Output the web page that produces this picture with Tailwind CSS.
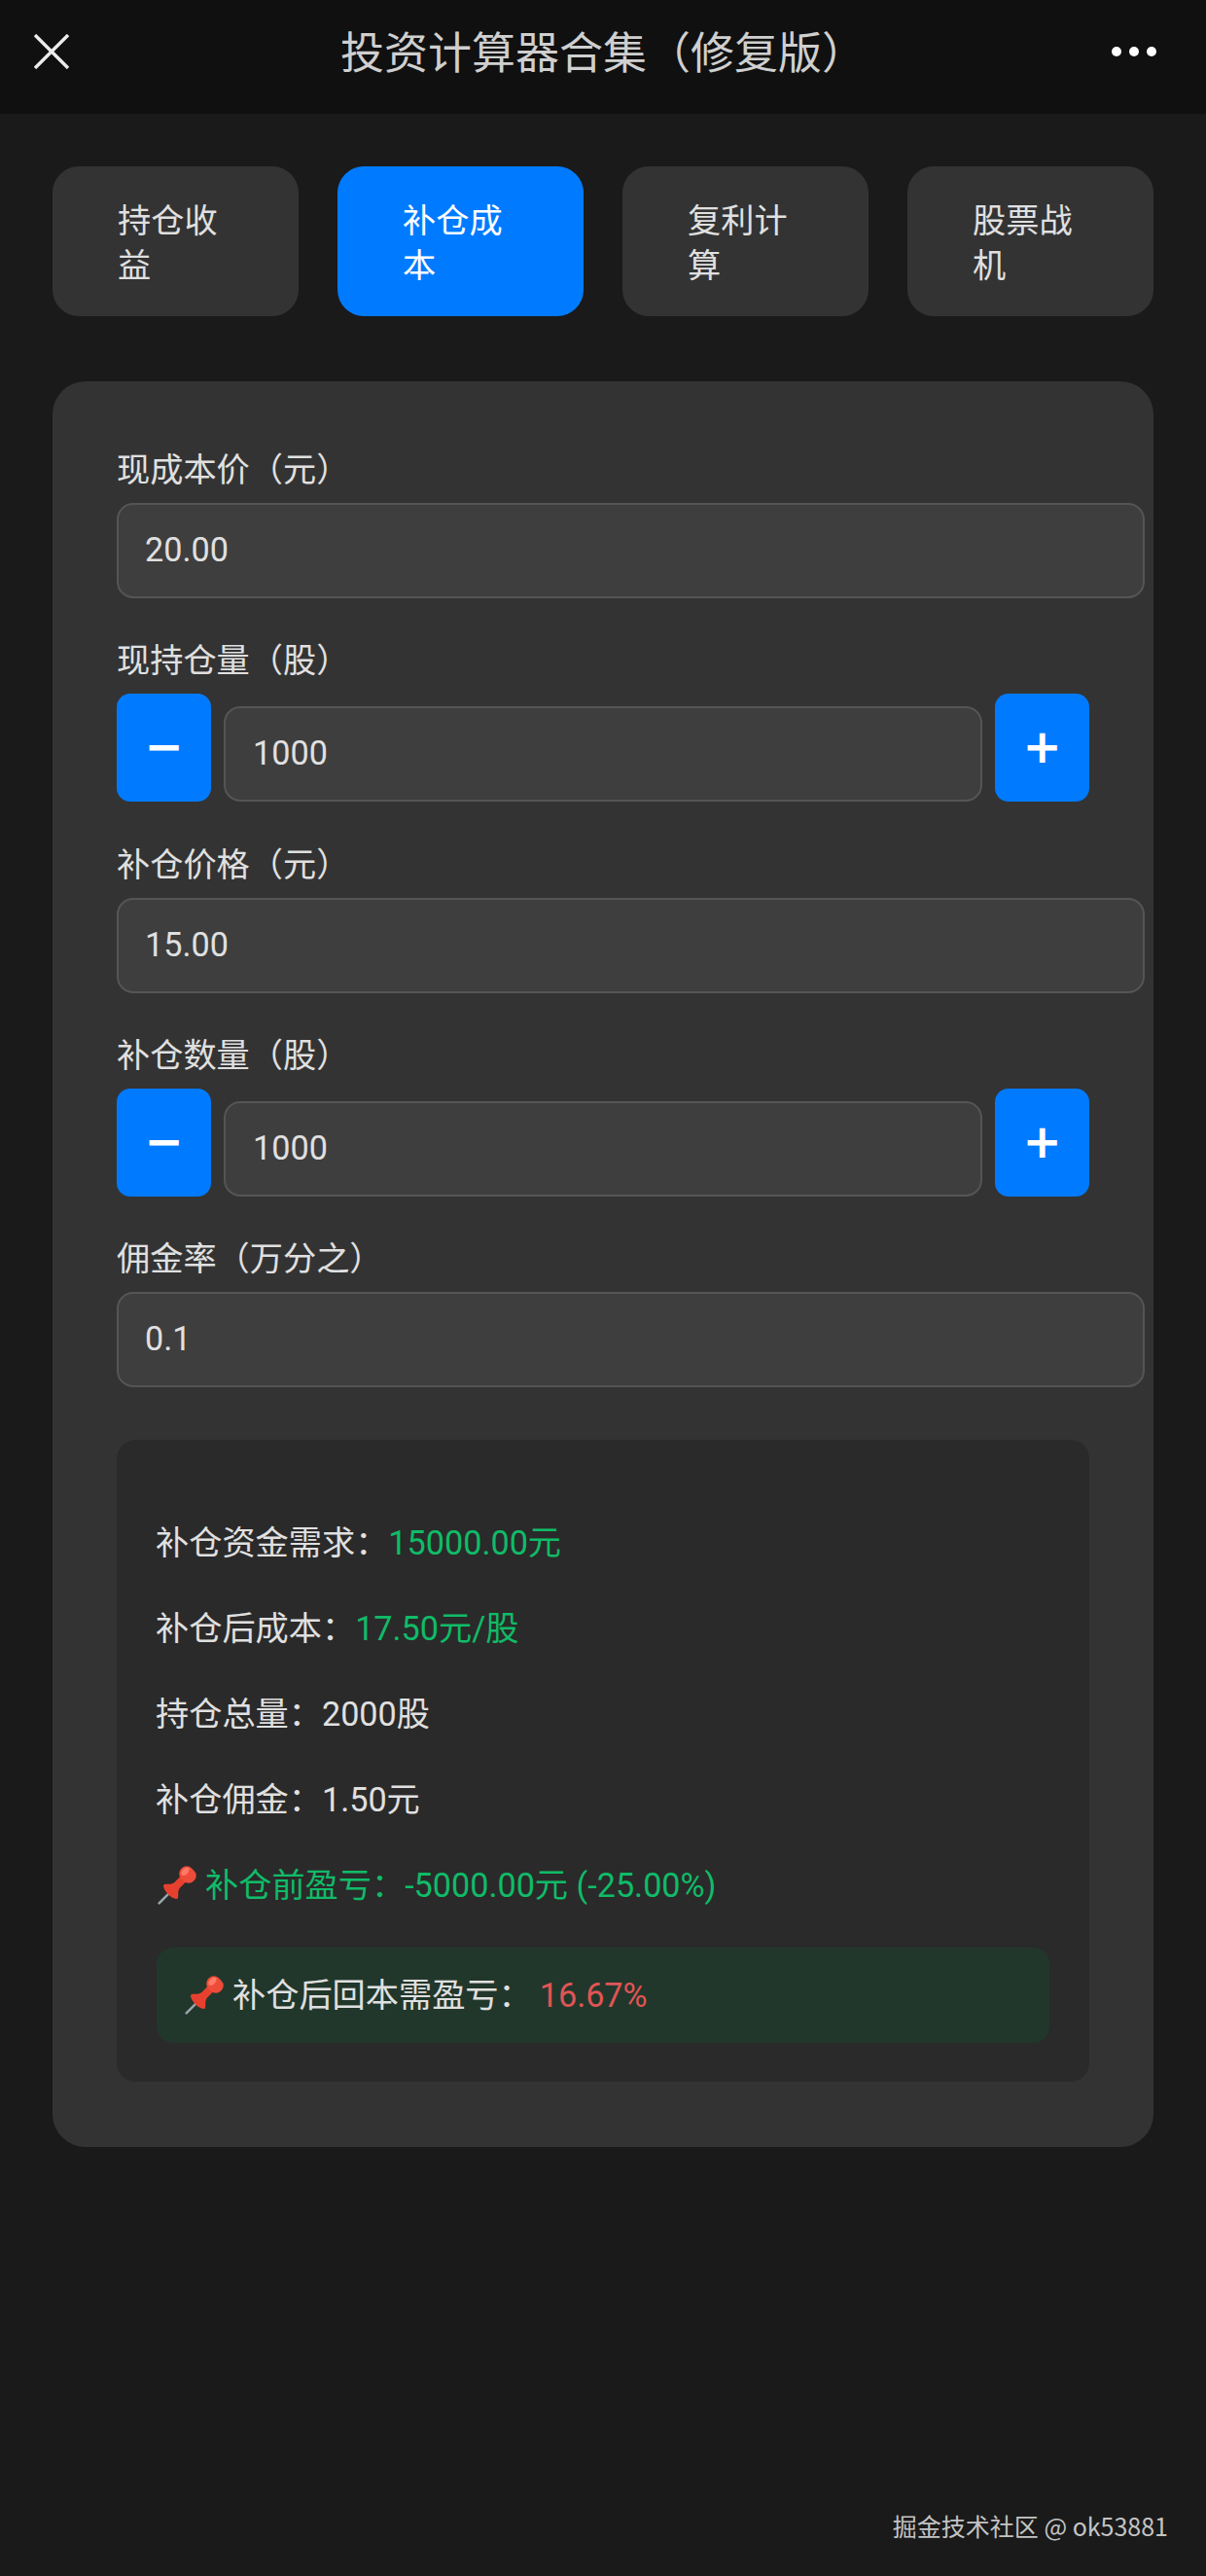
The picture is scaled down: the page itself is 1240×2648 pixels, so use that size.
<!DOCTYPE html>
<html lang="zh-CN">
<head>
  <meta charset="UTF-8" />
  <meta name="viewport" content="width=device-width, initial-scale=1.0" />
  <title>投资计算器合集（修复版）</title>
  <script src="https://cdn.jsdelivr.net/npm/@tailwindcss/browser@4"></script>
</head>
<body class="bg-[#1a1a1a] text-[#e0e0e0] text-[34.2px] leading-[48px] font-[family-name:Roboto,'Noto_Sans_CJK_SC',sans-serif]">
  <div class="relative w-[1240px] h-[2648px] overflow-hidden">
    <!-- top bar -->
    <header class="h-[117px] pb-[11px] pl-[35px] pr-[51px] bg-[#101010] flex items-center justify-between">
      <svg class="w-[36px] h-[36px]" viewBox="0 0 36 36" fill="none" stroke="#ececec" stroke-width="3.4"><path d="M1 1 35 35M35 1 1 35" /></svg>
      <h1 class="text-[45px] leading-[60px] text-[#cfcfcf] ml-[26px] mt-[6px]">投资计算器合集（修复版）</h1>
      <div class="flex gap-[8px]">
        <span class="w-[10px] h-[10px] rounded-full bg-white"></span>
        <span class="w-[10px] h-[10px] rounded-full bg-white"></span>
        <span class="w-[10px] h-[10px] rounded-full bg-white"></span>
      </div>
    </header>

    <main class="px-[54px] pt-[54px]">
      <!-- tabs -->
      <div class="flex gap-[40px] mb-[67px]">
        <button class="w-[253px] h-[154px] pl-[67px] pr-[66px] pt-[3px] rounded-[27px] bg-[#333333] text-left leading-[46px]">持仓收益</button>
        <button class="w-[253px] h-[154px] pl-[67px] pr-[66px] pt-[3px] rounded-[27px] bg-[#007bff] text-left leading-[46px] text-white">补仓成本</button>
        <button class="w-[253px] h-[154px] pl-[67px] pr-[66px] pt-[3px] rounded-[27px] bg-[#333333] text-left leading-[46px]">复利计算</button>
        <button class="w-[253px] h-[154px] pl-[67px] pr-[66px] pt-[3px] rounded-[27px] bg-[#333333] text-left leading-[46px]">股票战机</button>
      </div>

      <section class="h-[1815px] pt-[65px] px-[66px] rounded-[34px] bg-[#333333]">
        <div class="mb-[38px]">
          <label class="block h-[48px] pt-[2px] mb-[12px]">现成本价（元）</label>
          <input value="20.00" class="block w-[1057px] h-[98px] px-[27px] pb-[2px] rounded-[17px] border-2 border-[#555555] bg-[#3e3e3e]" />
        </div>

        <div class="mb-[39px]">
          <label class="block h-[48px] pt-[2px] mb-[12px]">现持仓量（股）</label>
          <div class="flex items-end gap-[13px] w-[1000px]">
            <button class="shrink-0 w-[97px] h-[111px] pb-[3px] rounded-[14px] bg-[#007bff] text-white font-bold text-[48px] font-[family-name:'DejaVu_Sans',sans-serif]">−</button>
            <input value="1000" class="flex-1 min-w-0 h-[98px] px-[28px] pb-[2px] rounded-[17px] border-2 border-[#555555] bg-[#3e3e3e]" />
            <button class="shrink-0 w-[97px] h-[111px] pb-[3px] rounded-[14px] bg-[#007bff] text-white font-bold text-[48px] font-[family-name:'DejaVu_Sans',sans-serif]">+</button>
          </div>
        </div>

        <div class="mb-[38px]">
          <label class="block h-[48px] pt-[2px] mb-[12px]">补仓价格（元）</label>
          <input value="15.00" class="block w-[1057px] h-[98px] px-[27px] pb-[2px] rounded-[17px] border-2 border-[#555555] bg-[#3e3e3e]" />
        </div>

        <div class="mb-[38px]">
          <label class="block h-[48px] pt-[2px] mb-[12px]">补仓数量（股）</label>
          <div class="flex items-end gap-[13px] w-[1000px]">
            <button class="shrink-0 w-[97px] h-[111px] pb-[3px] rounded-[14px] bg-[#007bff] text-white font-bold text-[48px] font-[family-name:'DejaVu_Sans',sans-serif]">−</button>
            <input value="1000" class="flex-1 min-w-0 h-[98px] px-[28px] pb-[2px] rounded-[17px] border-2 border-[#555555] bg-[#3e3e3e]" />
            <button class="shrink-0 w-[97px] h-[111px] pb-[3px] rounded-[14px] bg-[#007bff] text-white font-bold text-[48px] font-[family-name:'DejaVu_Sans',sans-serif]">+</button>
          </div>
        </div>

        <div class="mb-[54px]">
          <label class="block h-[48px] pt-[2px] mb-[12px]">佣金率（万分之）</label>
          <input value="0.1" class="block w-[1057px] h-[98px] px-[27px] pb-[2px] rounded-[17px] border-2 border-[#555555] bg-[#3e3e3e]" />
        </div>

        <!-- results -->
        <div class="w-[1000px] pt-[82px] px-[40px] pb-[40px] rounded-[20px] bg-[#2a2a2a] flex flex-col gap-[40px]">
          <p>补仓资金需求：<span class="text-[#10bb68]">15000.00元</span></p>
          <p>补仓后成本：<span class="text-[#10bb68]">17.50元/股</span></p>
          <p>持仓总量：2000股</p>
          <p>补仓佣金：1.50元</p>
          <p class="flex items-center text-[#10bb68]">
            <svg class="w-[42px] h-[40px] ml-[1px] mr-[8px] shrink-0 overflow-visible" viewBox="0 0 42 40"><g transform="rotate(45 21 20)"><path d="M21 30V47" stroke="#9aa7ae" stroke-width="2.4" /><path d="M17 10h8v10c1 5 5 6 6 9a10 4 0 0 1-20 0c1-3 5-4 6-9z" fill="#e8402f" /><rect x="12" y="-3" width="18" height="15" rx="7" fill="#ee4c3a" /><ellipse cx="17" cy="4" rx="3" ry="5" fill="#ff7a66" /></g></svg>
            <span>补仓前盈亏：-5000.00元 (-25.00%)</span>
          </p>
          <div class="h-[98px] mx-[1px] pl-[28px] pr-[28px] rounded-[17px] bg-[#22372b] flex items-center">
            <svg class="w-[42px] h-[40px] mr-[8px] shrink-0 overflow-visible" viewBox="0 0 42 40"><g transform="rotate(45 21 20)"><path d="M21 30V47" stroke="#9aa7ae" stroke-width="2.4" /><path d="M17 10h8v10c1 5 5 6 6 9a10 4 0 0 1-20 0c1-3 5-4 6-9z" fill="#e8402f" /><rect x="12" y="-3" width="18" height="15" rx="7" fill="#ee4c3a" /><ellipse cx="17" cy="4" rx="3" ry="5" fill="#ff7a66" /></g></svg>
            <span>补仓后回本需盈亏：</span>
            <span class="ml-[8px] text-[#e05555]">16.67%</span>
          </div>
        </div>
      </section>
    </main>

    <!-- platform watermark -->
    <div class="absolute right-[39px] top-[2579px] text-[25px] leading-[34px] text-[#c4c4c4] font-[family-name:'Noto_Sans_CJK_SC',sans-serif]">掘金技术社区 @ ok53881</div>
  </div>
</body>
</html>
